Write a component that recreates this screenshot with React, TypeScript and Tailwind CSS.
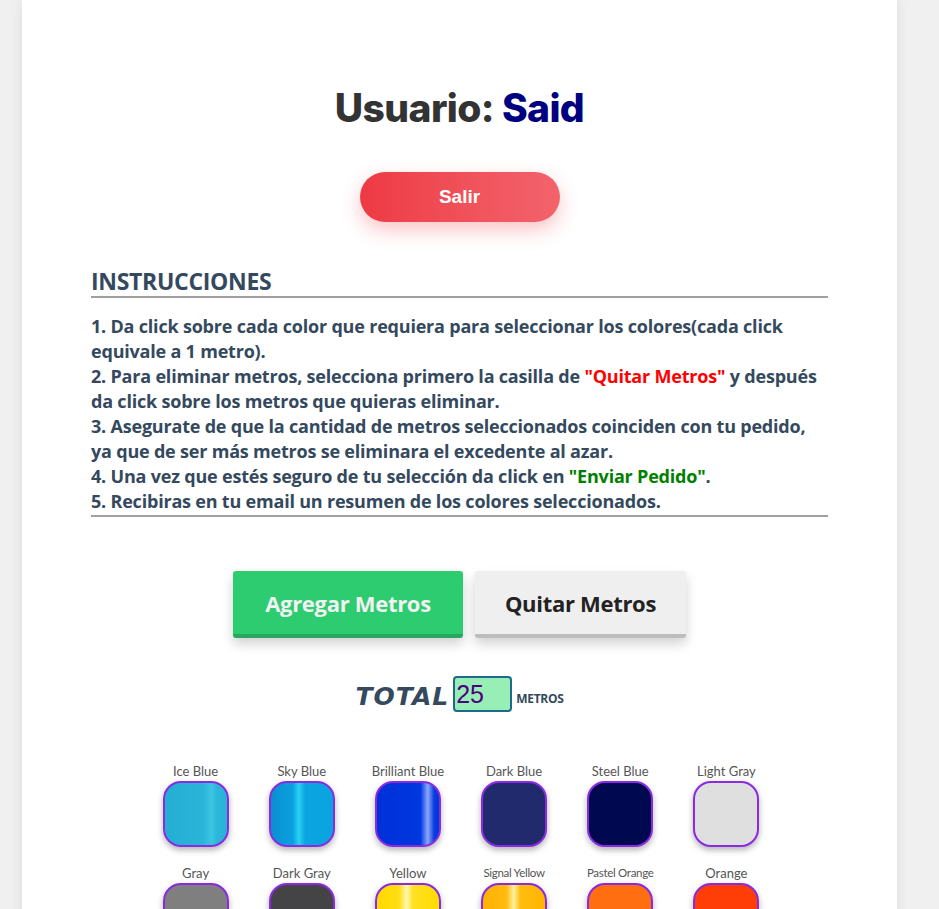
const colores = [
  { name: "Ice Blue", bg: "linear-gradient(90deg,#24aed3 0%,#29b4d8 60%,#3cc4e2 75%,#2ab6da 85%,#29b3d6 100%)" },
  { name: "Sky Blue", bg: "linear-gradient(90deg,#0a8fd0 0%,#0aa0e0 35%,#2ad2f2 45%,#0aa6e2 55%,#0aa3e0 100%)" },
  { name: "Brilliant Blue", bg: "linear-gradient(90deg,#0030d8 0%,#0038e0 70%,#8aa8ff 82%,#0a3ce0 92%,#0035dd 100%)" },
  { name: "Dark Blue", bg: "#222a6e" },
  { name: "Steel Blue", bg: "#00084f" },
  { name: "Light Gray", bg: "#e0dfe0" },
  { name: "Gray", bg: "#7f7f7f" },
  { name: "Dark Gray", bg: "#444446" },
  { name: "Yellow", bg: "linear-gradient(90deg,#ffd800 0%,#ffde10 35%,#fff6b0 48%,#ffe020 58%,#ffdc00 100%)" },
  { name: "Signal Yellow", bg: "linear-gradient(90deg,#ffb200 0%,#ffbb10 38%,#fff0a0 50%,#ffbe10 60%,#ffb400 100%)" },
  { name: "Pastel Orange", bg: "#ff6e10" },
  { name: "Orange", bg: "#ff3d07" },
];

export default function App() {
  return (
    <main className="min-h-screen bg-[#f0f0f0]">
      <div className="ml-[22px] w-[875px] bg-white pt-[86px] pb-10 shadow-[0_0_12px_rgba(0,0,0,0.08)]">
        <h1
          className="text-center text-[39px] font-extrabold leading-[44px] text-[#333] tracking-[-0.6px]"
          style={{ fontFamily: "Inter, 'Noto Sans', sans-serif" }}
        >
          Usuario: <span className="text-[#000080]">Said</span>
        </h1>

        <div className="mt-[42px] flex justify-center">
          <button
            className="h-[50px] w-[200px] rounded-full bg-gradient-to-r from-[#ed3944] to-[#f3636c] text-[19px] font-bold text-white shadow-[0_8px_20px_rgba(240,60,70,0.3)]"
            style={{ fontFamily: "'Liberation Sans', Arial, sans-serif" }}
          >
            Salir
          </button>
        </div>

        <section
          className="mx-auto mt-[44px] w-[737px] text-[#34495e]"
          style={{ fontFamily: "'Open Sans', 'Noto Sans', sans-serif" }}
        >
          <h2 className="border-b-2 border-[#a0a0a0] text-[23px] font-bold leading-[30px] tracking-[-0.3px]">
            INSTRUCCIONES
          </h2>
          <p className="mt-[16px] border-b-2 border-[#a0a0a0] pb-[1px] text-[18px] font-bold leading-[25px] tracking-[-0.2px]">
            1. Da click sobre cada color que requiera para seleccionar los colores(cada click equivale a 1 metro).
            <br />
            2. Para eliminar metros, selecciona primero la casilla de{" "}
            <span className="text-[#ff0000]">"Quitar Metros"</span> y después da click sobre los metros que quieras eliminar.
            <br />
            3. Asegurate de que la cantidad de metros seleccionados coinciden con tu pedido, ya que de ser más metros se eliminara el excedente al azar.
            <br />
            4. Una vez que estés seguro de tu selección da click en{" "}
            <span className="text-[#008000]">"Enviar Pedido"</span>.
            <br />
            5. Recibiras en tu email un resumen de los colores seleccionados.
          </p>
        </section>

        <div
          className="mt-[54px] flex justify-center gap-3"
          style={{ fontFamily: "'Open Sans', 'Noto Sans', sans-serif" }}
        >
          <button className="h-[67px] w-[230px] rounded-[3px] border-b-4 border-[#27a85e] bg-[#2ecc71] pt-[2px] text-[22px] font-bold text-[#f2f2f2] tracking-[-0.3px] shadow-[0_6px_12px_rgba(0,0,0,0.18)]">
            Agregar Metros
          </button>
          <button className="h-[67px] w-[211px] rounded-[3px] border-b-4 border-[#bdbdbd] bg-[#efefef] pt-[2px] text-[22px] font-bold text-[#222] tracking-[-0.3px] shadow-[0_6px_12px_rgba(0,0,0,0.18)]">
            Quitar Metros
          </button>
        </div>

        <div className="mt-[38px] flex items-end justify-center">
          <span
            className="text-[25px] font-black italic leading-[30px] text-[#34495e] tracking-[1px]"
            style={{ fontFamily: "'DejaVu Sans', 'Liberation Sans', sans-serif" }}
          >
            TOTAL
          </span>
          <div
            className="ml-[4px] h-[36px] w-[59px] rounded-[4px] border-2 border-[#1d6a8c] bg-[#98efb5] pl-[1px] text-[25px] leading-[32px] text-[#4b0082]"
            style={{ fontFamily: "'Liberation Sans', Arial, sans-serif" }}
          >
            25
          </div>
          <span
            className="ml-[4px] mb-[6px] text-[12px] font-bold leading-[14px] text-[#34495e] tracking-[-0.3px]"
            style={{ fontFamily: "'Open Sans', sans-serif" }}
          >
            METROS
          </span>
        </div>

        <div
          className="mx-auto mt-[51px] grid w-[640px] grid-cols-6 gap-y-[18px] pl-[3px]"
          style={{ fontFamily: "Lato, 'Noto Sans', sans-serif" }}
        >
          {colores.map((c) => (
            <div key={c.name} className="flex flex-col items-center">
              <span
                className={
                  c.name === "Signal Yellow" || c.name === "Pastel Orange"
                    ? "h-[16px] text-[11.5px] leading-[16px] text-[#555] tracking-[-0.3px]"
                    : "h-[16px] text-[13px] leading-[16px] text-[#555]"
                }
              >
                {c.name}
              </span>
              <div
                className="mt-[2px] h-[66px] w-[66px] rounded-[18px] border-2 border-[#8a2be2] shadow-[0_3px_6px_rgba(0,0,0,0.3)]"
                style={{ background: c.bg }}
              />
            </div>
          ))}
        </div>
      </div>
    </main>
  );
}
